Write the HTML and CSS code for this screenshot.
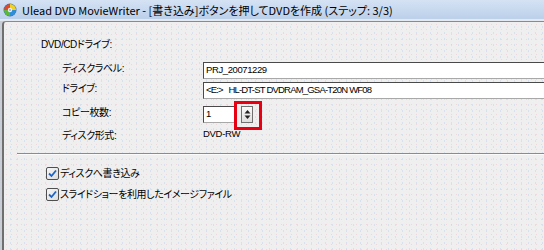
FILE: index.html
```html
<!DOCTYPE html>
<html lang="ja">
<head>
<meta charset="utf-8">
<title>Ulead DVD MovieWriter</title>
<link rel="stylesheet" href="styles.css">
</head>
<body>
<div class="window">
  <header class="titlebar">
    <svg class="app-icon" width="14" height="14" viewBox="0 0 14 14">
      <circle cx="7" cy="7" r="6.5" fill="#3d6fb8"/>
      <path d="M7 7 L7 1 A6 6 0 0 1 13 7 Z" fill="#f3d21c"/>
      <path d="M7 7 L13 7 A6 6 0 0 1 7 13 Z" fill="#2e8fd8"/>
      <path d="M7 7 L7 13 A6 6 0 0 1 1 7 Z" fill="#5cb83a"/>
      <path d="M7 7 L1 7 A6 6 0 0 1 7 1 Z" fill="#e04a2a"/>
      <circle cx="7" cy="7" r="2.2" fill="#e8eef6"/>
      <circle cx="7" cy="7" r="1" fill="#9aa8ba"/>
    </svg>
    <span class="title">Ulead DVD MovieWriter - [書き込み]ボタンを押してDVDを作成 (ステップ: 3/3)</span>
  </header>
  <div class="frame">
    <main class="panel">
      <div class="group-title">DVD/CDドライブ:</div>
      <div class="form">
        <span class="label">ディスクラベル:</span>
        <div class="field field-wide">PRJ_20071229</div>
        <span class="label">ドライブ:</span>
        <div class="field field-wide field-drive">&lt;E:&gt;&nbsp;&nbsp; HL-DT-ST DVDRAM_GSA-T20N WF08</div>
        <span class="label">コピー枚数:</span>
        <div class="spin-row">
          <div class="field field-num">1</div>
          <div class="spin">
            <svg width="7" height="13" viewBox="0 0 7 13">
              <path d="M3.5 2 L6.5 5.5 L0.5 5.5 Z" fill="#222"/>
              <path d="M3.5 11 L6.5 7.5 L0.5 7.5 Z" fill="#222"/>
            </svg>
          </div>
        </div>
        <span class="label">ディスク形式:</span>
        <span class="value">DVD-RW</span>
      </div>
      <div class="separator"></div>
      <div class="checks">
        <label class="check">
          <span class="box"><svg width="9" height="9" viewBox="0 0 9 9"><path d="M1 4.5 L3.5 7 L8 1.5" fill="none" stroke="#1d63c4" stroke-width="1.8"/></svg></span>
          <span>ディスクへ書き込み</span>
        </label>
        <label class="check">
          <span class="box"><svg width="9" height="9" viewBox="0 0 9 9"><path d="M1 4.5 L3.5 7 L8 1.5" fill="none" stroke="#1d63c4" stroke-width="1.8"/></svg></span>
          <span>スライドショーを利用したイメージファイル</span>
        </label>
      </div>
    </main>
  </div>
</div>
</body>
</html>
```

FILE: styles.css
```css
html, body {
  margin: 0;
  padding: 0;
}
body {
  width: 544px;
  height: 250px;
  overflow: hidden;
  background: #c9ced6;
}
.window {
  display: flex;
  flex-direction: column;
  height: 250px;
}
.titlebar {
  height: 19px;
  display: flex;
  align-items: center;
  gap: 5px;
  padding-left: 3px;
  background: linear-gradient(#d4e2f4, #bcd0ea);
  border-bottom: 2px solid #e4e9ef;
}
.app-icon {
  flex: none;
}
.title {
  font: 11px "Noto Sans CJK JP", sans-serif;
  font-feature-settings: "palt";
  color: #000;
  white-space: nowrap;
}
.frame {
  flex: 1;
  display: flex;
  padding-left: 2px;
  background: #c9ced6;
}
.panel {
  flex: 1;
  border-left: 2px solid #6f6f6f;
  border-top: 1px solid #8a8a8a;
  border-top-left-radius: 4px;
  background-color: #efefef;
  background-image:
    radial-gradient(rgba(236, 196, 206, 0.55) 0.7px, transparent 0.9px),
    radial-gradient(rgba(196, 214, 236, 0.55) 0.7px, transparent 0.9px);
  background-size: 5px 5px, 7px 6px;
  background-position: 0 0, 3px 2px;
  padding-top: 16px;
  font: 10px "Liberation Sans", "Noto Sans CJK JP", sans-serif;
  font-feature-settings: "palt";
  letter-spacing: -0.4px;
  color: #000;
}
.group-title {
  margin-left: 37px;
  line-height: 13px;
}
.form {
  margin-top: 11px;
  margin-left: 58px;
  display: grid;
  grid-template-columns: 141px 400px;
  grid-template-rows: 17px 17px 17px 10px;
  row-gap: 3px;
}
.form > :nth-child(5),
.form > :nth-child(6) {
  margin-top: 4px;
}
.form > :nth-child(7),
.form > :nth-child(8) {
  margin-top: 7px;
}
.label {
  line-height: 13px;
  white-space: nowrap;
}
.field {
  box-sizing: border-box;
  height: 17px;
  background: #fff;
  border: 1px solid #a8a8a8;
  border-top-color: #4a4a4a;
  border-left-color: #4a4a4a;
  font: 9.5px "Liberation Sans", sans-serif;
  letter-spacing: -0.4px;
  line-height: 13px;
  padding-left: 2px;
  white-space: nowrap;
}
.field-drive {
  letter-spacing: -0.8px;
}
.field-wide {
  width: 400px;
}
.spin-row {
  display: flex;
  gap: 6px;
}
.field-num {
  width: 32px;
}
.spin {
  position: relative;
  box-sizing: border-box;
  width: 12px;
  height: 17px;
  border: 1px solid #707070;
  background: linear-gradient(#fafafa, #dedede);
  display: flex;
  align-items: center;
  justify-content: center;
}
.spin::after {
  content: "";
  position: absolute;
  left: -8px;
  top: -6px;
  width: 22px;
  height: 23px;
  border: 3px solid #e60012;
}
.value {
  font: 9.5px "Liberation Sans", sans-serif;
  letter-spacing: -0.3px;
  line-height: 10px;
}
.separator {
  margin-top: 21px;
  margin-left: 13px;
  height: 1px;
  background: #8c8c8c;
  border-bottom: 1px solid #fbfbfb;
}
.checks {
  margin-top: 12px;
  margin-left: 42px;
  display: flex;
  flex-direction: column;
  gap: 8px;
}
.check {
  display: flex;
  align-items: center;
  gap: 1px;
  line-height: 13px;
  white-space: nowrap;
}
.box {
  box-sizing: border-box;
  width: 13px;
  height: 13px;
  border: 1px solid #4f4f4f;
  border-radius: 2px;
  background: linear-gradient(135deg, #f6f6f6, #dcdcdc);
  display: flex;
  align-items: center;
  justify-content: center;
}
```
